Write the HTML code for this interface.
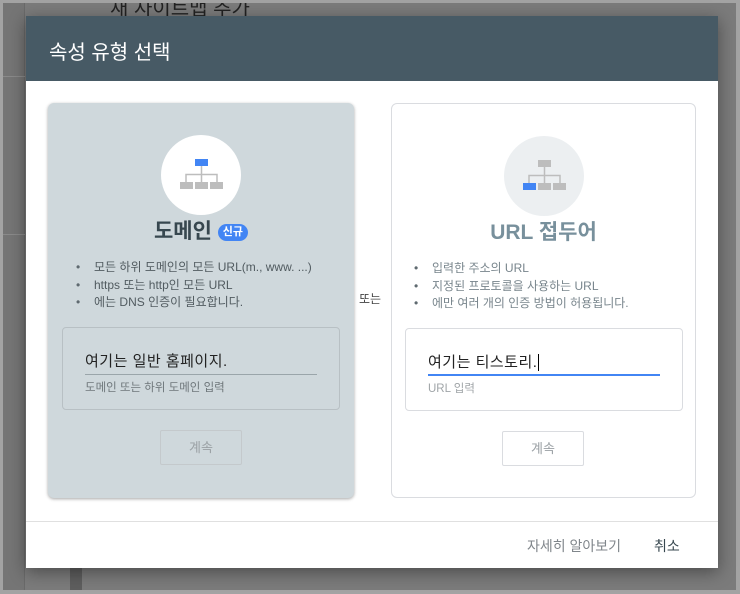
<!DOCTYPE html>
<html><head><meta charset="utf-8"><style>
*{margin:0;padding:0;box-sizing:border-box}
body{width:740px;height:594px;overflow:hidden;background:#7b7b7b;font-family:"Liberation Sans","Noto Sans CJK KR",sans-serif;position:relative}
.frame{position:absolute;inset:0;border:3px solid #a3a3a3;border-right-width:4px;border-bottom-width:4px}
.abs{position:absolute}
.dlg{position:absolute;left:26px;top:16px;width:692px;height:552px;background:#fff;box-shadow:0 4px 16px rgba(0,0,0,.4)}
.hdr{height:65px;background:#475a65;color:#fff;font-size:20px;padding:20px 0 0 23px}
.card{position:absolute;top:87px;width:306px;height:395px;border-radius:6px;text-align:center}
.c1{left:22px;background:#cfd8dc;box-shadow:0 1px 3px rgba(0,0,0,.35)}
.c2{left:365px;width:305px;border:1px solid #dadce0;background:#fff}
.circ{position:absolute;left:113px;top:32px;width:80px;height:80px;border-radius:50%}
.ttl{position:absolute;top:112px;left:0;right:0;font-size:21px;font-weight:bold}
ul{position:absolute;left:28px;top:156px;text-align:left;font-size:12px;line-height:17.5px;color:#515b60;list-style:none}
ul li:before{content:"•";display:inline-block;width:18px;color:#5f6a70}
.box{position:absolute;left:14px;top:224px;width:278px;height:83px;border:1px solid #b8c0c4;border-radius:4px;text-align:left}
.btn{position:absolute;left:112px;top:327px;width:82px;height:35px;border:1px solid #c4c9cc;border-radius:2px;color:#9aa0a4;font-size:13px;line-height:33px}
</style></head><body>
<div class="abs" style="left:3px;top:3px;width:22px;height:588px;background:#757575"></div>
<div class="abs" style="left:24px;top:3px;width:1px;height:588px;background:#6a6a6a"></div>
<div class="abs" style="left:70px;top:568px;width:12px;height:23px;background:#5e5e5e"></div>
<div class="abs" style="left:3px;top:76px;width:22px;height:1px;background:#8a8a8a"></div>
<div class="abs" style="left:3px;top:234px;width:22px;height:1px;background:#8a8a8a"></div>
<div class="abs" style="left:110px;top:-8px;color:#222;font-size:20px">새 사이트맵 추가</div>
<div class="frame"></div>
<div class="dlg">
<div class="hdr">속성 유형 선택</div>
<div class="card c1">
 <div class="circ" style="background:#fff">
  <svg width="80" height="80" viewBox="0 0 80 80"><rect x="34" y="24" width="13" height="7" fill="#4285f4"/><path d="M40.5 31v8M25 47v-7.5h31V47M40.5 39v8" stroke="#bdbdbd" stroke-width="1.5" fill="none"/><rect x="19" y="47" width="13" height="7" fill="#bdbdbd"/><rect x="34" y="47" width="13" height="7" fill="#bdbdbd"/><rect x="49" y="47" width="13" height="7" fill="#bdbdbd"/></svg>
 </div>
 <div class="ttl" style="color:#37474f">도메인 <span style="display:inline-block;vertical-align:3px;background:#4285f4;color:#fff;font-size:11px;border-radius:9px;padding:1px 5px;line-height:15px">신규</span></div>
 <ul><li>모든 하위 도메인의 모든 URL(m., www. ...)</li><li>https 또는 http인 모든 URL</li><li>에는 DNS 인증이 필요합니다.</li></ul>
 <div class="box"><div class="abs" style="left:22px;top:22px;width:232px;border-bottom:1px solid #9aa5aa;font-size:15px;color:#222;padding-bottom:3px;letter-spacing:.5px">여기는 일반 홈페이지.</div><div class="abs" style="left:22px;top:51px;font-size:11.5px;color:#6f777b">도메인 또는 하위 도메인 입력</div></div>
 <div class="btn">계속</div>
</div>
<div class="abs" style="left:333px;top:274px;font-size:12px;color:#444">또는</div>
<div class="card c2">
 <div class="circ" style="background:#eceff1;left:112px">
  <svg width="80" height="80" viewBox="0 0 80 80"><rect x="34" y="24" width="13" height="7" fill="#bdbdbd"/><path d="M40.5 31v8M25 47v-7.5h31V47M40.5 39v8" stroke="#bdbdbd" stroke-width="1.5" fill="none"/><rect x="19" y="47" width="13" height="7" fill="#4285f4"/><rect x="34" y="47" width="13" height="7" fill="#bdbdbd"/><rect x="49" y="47" width="13" height="7" fill="#bdbdbd"/></svg>
 </div>
 <div class="ttl" style="color:#78909c">URL 접두어</div>
 <ul style="left:22px;color:#78858c"><li>입력한 주소의 URL</li><li>지정된 프로토콜을 사용하는 URL</li><li>에만 여러 개의 인증 방법이 허용됩니다.</li></ul>
 <div class="box" style="left:13px;border-color:#dadce0"><div class="abs" style="left:22px;top:22px;width:232px;border-bottom:2px solid #4285f4;font-size:15px;color:#222;padding-bottom:2px;letter-spacing:.5px">여기는 티스토리.<span style="border-left:1px solid #000;margin-left:1px"></span></div><div class="abs" style="left:22px;top:51px;font-size:11.5px;color:#a0a5a8">URL 입력</div></div>
 <div class="btn" style="left:110px;border-color:#dadce0">계속</div>
</div>
<div class="abs" style="left:0;top:505px;width:692px;height:1px;background:#e0e0e0"></div>
<div class="abs" style="left:501px;top:520px;font-size:14px;color:#80868b">자세히 알아보기</div>
<div class="abs" style="left:628px;top:520px;font-size:14px;color:#37474f">취소</div>
</div>
</body></html>
